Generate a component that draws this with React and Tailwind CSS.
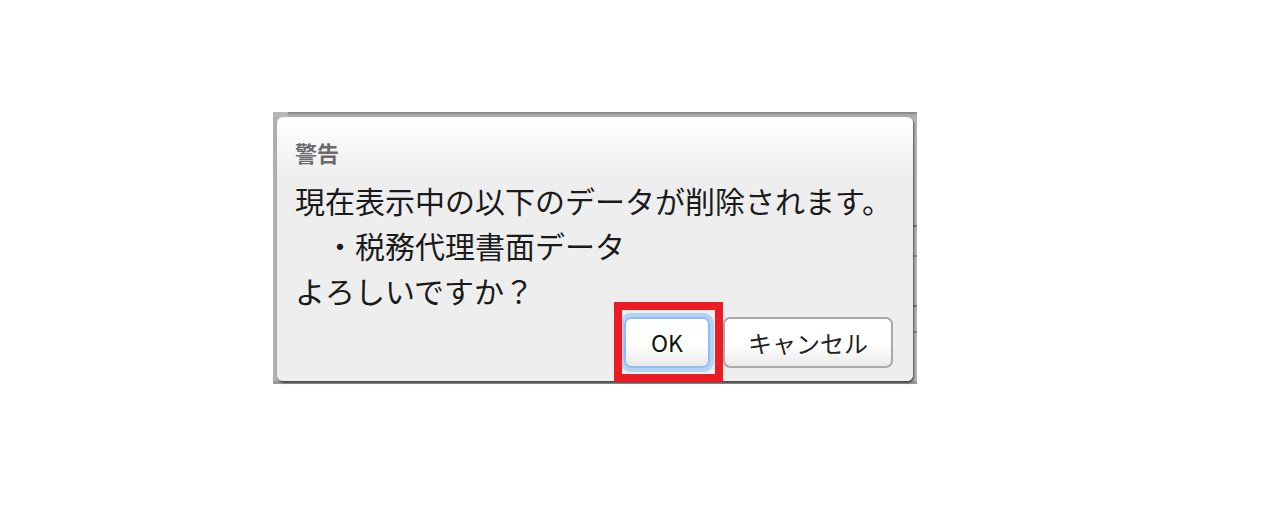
export default function App() {
  return (
    <div className="w-[1266px] h-[512px] bg-white font-['Noto_Sans_CJK_JP','Noto_Sans',sans-serif] pt-[112px] pl-[273px]">
      <div className="w-[644px] h-[272px] bg-[#b4b4b4] flex flex-col">
        <div className="h-[5px] flex shrink-0">
          <div className="w-[15px] bg-[#b8b8b8]" />
          <div className="flex-1 flex flex-col">
            <div className="h-[2px] bg-[#8e8e8e]" />
            <div className="flex-1 bg-[#a9a9a9]" />
          </div>
        </div>
        <div className="flex flex-1">
          <div className="w-[4px] bg-[#b0b0b0]" />
          <div className="relative w-[636px] h-[264px] rounded-[6px] bg-[linear-gradient(#ffffff,#eeeeee_62px)] shadow-[1px_2px_2px_rgba(0,0,0,0.55)] pt-[20px] pl-[18px] pr-[20px] flex flex-col">
            <div className="text-[22px] leading-[30px] font-bold text-[#6a6a6a]">警告</div>
            <div className="mt-[11px] text-[30px] leading-[45px] text-[#1a1a1a]">
              <div>現在表示中の以下のデータが削除されます。</div>
              <div>　・税務代理書面データ</div>
              <div>よろしいですか？</div>
            </div>
            <div className="mt-[4px] flex justify-end gap-[13px]">
              <div className="relative">
                <div className="w-[86px] h-[51px] rounded-[7px] border-[2px] border-[#8dbdf1] bg-[linear-gradient(#ffffff,#ffffff_55%,#e9e9e9)] shadow-[0_0_0_4px_#b4d3f3] flex items-center justify-center text-[23px] text-[#111]">
                  OK
                </div>
                <div className="absolute left-[-10px] top-[-15px] w-[109px] h-[80px] border-[8px] border-[#ec1c24]" />
              </div>
              <div className="w-[170px] h-[51px] rounded-[7px] border-[2px] border-[#a9a9a9] bg-[linear-gradient(#ffffff,#ffffff_55%,#e9e9e9)] flex items-center justify-center text-[24px] text-[#222]">
                キャンセル
              </div>
            </div>
          </div>
          <div className="w-[4px] bg-[#b2b2b2] flex flex-col pt-[108px] gap-[14px]">
            <div className="h-[2px] bg-[#777]" />
            <div className="h-[2px] bg-[#888] mt-[14px]" />
            <div className="h-[2px] bg-[#777] mt-[34px]" />
            <div className="h-[2px] bg-[#888] mt-[10px]" />
          </div>
        </div>
        <div className="h-[3px] bg-[#9a9a9a]" />
      </div>
    </div>
  );
}
